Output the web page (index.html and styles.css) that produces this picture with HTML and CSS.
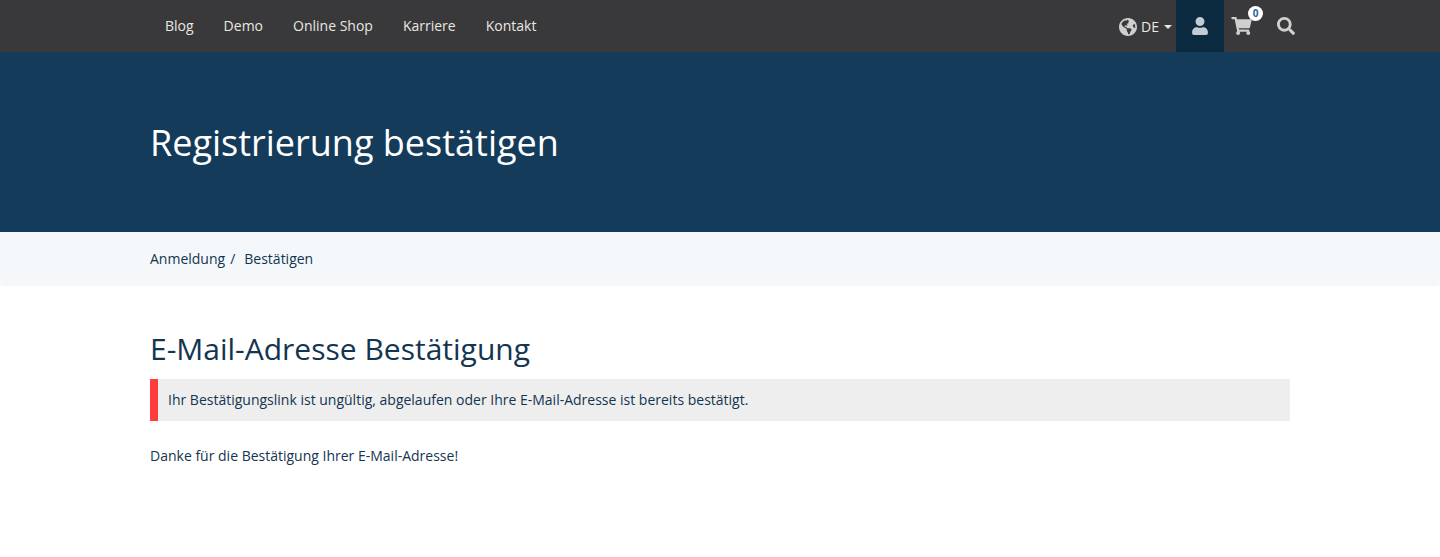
FILE: index.html
```html
<!DOCTYPE html>
<html lang="de">
<head>
    <meta charset="UTF-8">
    <meta name="viewport" content="width=device-width, initial-scale=1.0">
    <title>Registrierung bestätigen</title>
    <link rel="stylesheet" href="styles.css">
</head>
<body>
    <nav class="navbar">
        <div class="nav-inner">
            <ul class="nav-links">
                <li><a href="#">Blog</a></li>
                <li><a href="#">Demo</a></li>
                <li><a href="#">Online Shop</a></li>
                <li><a href="#">Karriere</a></li>
                <li><a href="#">Kontakt</a></li>
            </ul>
            <div class="nav-tools">
                <a class="lang" href="#">
                    <svg class="icon-globe" viewBox="0 0 496 512"><path d="M248 8C111.03 8 0 119.03 0 256s111.03 248 248 248 248-111.03 248-248S384.97 8 248 8zm82.29 357.6c-3.9 3.88-7.99 7.95-11.31 11.28-2.99 3-5.1 6.7-6.17 10.71-1.51 5.66-2.73 11.38-4.77 16.87l-17.39 46.85c-13.76 3-28 4.69-42.65 4.69v-27.38c1.69-12.62-7.64-36.26-22.63-51.25-6-6-9.37-14.14-9.37-22.63v-32.01c0-11.64-6.27-22.34-16.46-27.97-14.37-7.95-34.81-19.06-48.81-26.11-11.48-5.78-22.1-13.14-31.65-21.75l-.8-.72a114.792 114.792 0 0 1-18.06-20.74c-9.38-13.77-24.66-36.42-34.59-51.14 20.47-45.5 57.36-82.04 103.2-101.89l24.01 12.01C203.48 89.74 216 82.01 216 70.11v-11.3c7.99-1.29 16.12-2.11 24.39-2.42l28.3 28.3c6.25 6.25 6.25 16.38 0 22.63L264 112l-10.34 10.34c-3.12 3.12-3.12 8.19 0 11.31l4.69 4.69c3.12 3.12 3.12 8.19 0 11.31l-8 8a8.008 8.008 0 0 1-5.66 2.34h-8.99c-2.08 0-4.08.81-5.58 2.27l-9.92 9.65a8.008 8.008 0 0 0-1.58 9.31l15.59 31.19c2.66 5.32-1.21 11.58-7.15 11.58h-5.64c-1.93 0-3.79-.7-5.24-1.96l-9.28-8.06a16.017 16.017 0 0 0-15.55-3.1l-31.17 10.39a11.95 11.95 0 0 0-8.17 11.34c0 4.53 2.56 8.66 6.61 10.69l11.08 5.54c9.41 4.71 19.79 7.16 30.31 7.16s22.59 27.29 32 32h66.75c8.49 0 16.62 3.37 22.63 9.37l13.69 13.69a30.503 30.503 0 0 1 8.93 21.57 46.536 46.536 0 0 1-13.72 32.98zM417 274.25c-5.79-1.45-10.84-5-14.15-9.97l-17.98-26.97a23.97 23.97 0 0 1 0-26.62l19.59-29.38c2.32-3.47 5.5-6.29 9.24-8.15l12.98-6.49C440.2 193.59 448 223.87 448 256c0 8.67-.74 17.16-1.82 25.54L417 274.25z"/></svg>
                    <span>DE</span>
                    <span class="caret"></span>
                </a>
                <a class="tool tool-active" href="#">
                    <svg class="icon-user" viewBox="0 0 448 512"><path d="M224 256c70.7 0 128-57.3 128-128S294.7 0 224 0 96 57.3 96 128s57.3 128 128 128zm89.6 32h-16.7c-22.2 10.2-46.9 16-72.9 16s-50.6-5.8-72.9-16h-16.7C60.2 288 0 348.2 0 422.4V464c0 26.5 21.5 48 48 48h352c26.5 0 48-21.5 48-48v-41.6c0-74.2-60.2-134.4-134.4-134.4z"/></svg>
                </a>
                <a class="tool tool-cart" href="#">
                    <svg class="icon-cart" viewBox="0 0 576 512"><path d="M528.12 301.319l47.273-208C578.806 78.301 567.391 64 551.99 64H159.208l-9.166-44.81C147.758 8.021 137.93 0 126.529 0H24C10.745 0 0 10.745 0 24v16c0 13.255 10.745 24 24 24h69.883l70.248 343.435C147.325 417.1 136 435.222 136 456c0 30.928 25.072 56 56 56s56-25.072 56-56c0-15.674-6.447-29.835-16.824-40h209.647C430.447 426.165 424 440.326 424 456c0 30.928 25.072 56 56 56s56-25.072 56-56c0-22.172-12.888-41.332-31.579-50.405l5.517-24.276c3.413-15.018-8.002-29.319-23.403-29.319H218.117l-6.545-32h293.145c11.206 0 20.92-7.754 23.403-18.681z"/></svg>
                    <span class="badge">0</span>
                </a>
                <a class="tool" href="#">
                    <svg class="icon-search" viewBox="0 0 512 512"><path d="M505 442.7L405.3 343c-4.5-4.5-10.6-7-17-7H372c27.6-35.3 44-79.7 44-128C416 93.1 322.9 0 208 0S0 93.1 0 208s93.1 208 208 208c48.3 0 92.7-16.4 128-44v16.3c0 6.4 2.5 12.5 7 17l99.7 99.7c9.4 9.4 24.6 9.4 33.9 0l28.3-28.3c9.4-9.4 9.4-24.6.1-34zM208 336c-70.7 0-128-57.2-128-128 0-70.7 57.2-128 128-128 70.7 0 128 57.2 128 128 0 70.7-57.2 128-128 128z"/></svg>
                </a>
            </div>
        </div>
    </nav>

    <header class="page-header">
        <div class="container">
            <h1>Registrierung bestätigen</h1>
        </div>
    </header>

    <div class="breadcrumb">
        <div class="container">
            <a href="#">Anmeldung</a><span class="sep">/</span><a href="#">Bestätigen</a>
        </div>
    </div>

    <main class="container content">
        <h2>E-Mail-Adresse Bestätigung</h2>
        <div class="alert">Ihr Bestätigungslink ist ungültig, abgelaufen oder Ihre E-Mail-Adresse ist bereits bestätigt.</div>
        <p>Danke für die Bestätigung Ihrer E-Mail-Adresse!</p>
    </main>
</body>
</html>
```

FILE: styles.css
```css
* {
    margin: 0;
    padding: 0;
    box-sizing: border-box;
}

body {
    font-family: "Open Sans", sans-serif;
    font-size: 14px;
    line-height: 20px;
    color: #133551;
    background: #fff;
}

a {
    color: inherit;
    text-decoration: none;
}

.container {
    width: 1140px;
    margin: 0 auto;
}

.navbar {
    height: 52px;
    background: #39383a;
    color: #e8e8e0;
}

.nav-inner {
    width: 1160px;
    margin-left: 150px;
    height: 52px;
    display: flex;
    justify-content: space-between;
}

.nav-links {
    display: flex;
    list-style: none;
}

.nav-links a {
    display: block;
    padding: 16px 15px;
}

.nav-tools {
    display: flex;
}

.lang {
    display: flex;
    align-items: center;
    padding-right: 4px;
    padding-top: 2px;
}

.icon-globe {
    width: 18px;
    height: 20px;
    margin-right: 4px;
    fill: #cfcfcf;
}

.caret {
    width: 0;
    height: 0;
    margin-left: 5px;
    border-top: 4px solid #e8e8e0;
    border-left: 4px solid transparent;
    border-right: 4px solid transparent;
}

.tool {
    position: relative;
    width: 48px;
    height: 52px;
    display: flex;
    align-items: center;
    justify-content: center;
    fill: #cfcfcf;
}

.tool-active {
    background: #0b2a3f;
    fill: #c3ccd3;
}

.tool-cart {
    width: 38px;
    justify-content: flex-start;
    padding-left: 7px;
}

.icon-user {
    width: 16px;
    height: 18px;
}

.icon-cart {
    width: 21px;
    height: 18px;
}

.icon-search {
    width: 18px;
    height: 18px;
}

.badge {
    position: absolute;
    top: 6px;
    left: 24px;
    width: 15px;
    height: 15px;
    border-radius: 50%;
    background: #fff;
    color: #2a6491;
    font-size: 10px;
    font-weight: 700;
    line-height: 15px;
    text-align: center;
}

.page-header {
    height: 180px;
    background: #153b5a;
    color: #fff;
    display: flex;
    align-items: center;
    padding-top: 2px;
}

h1 {
    font-size: 36px;
    font-weight: 400;
    line-height: 40px;
}

.breadcrumb {
    height: 54px;
    background: #f4f8fb;
    border-radius: 0 0 4px 4px;
    padding-top: 17px;
}

.sep {
    margin: 0 9px 0 5px;
}

.content {
    padding-top: 43px;
}

h2 {
    font-size: 30px;
    font-weight: 400;
    line-height: 40px;
    margin-bottom: 10px;
}

.alert {
    height: 42px;
    padding: 11px 10px;
    background: #eee;
    border-left: 8px solid #ff3c3c;
    margin-bottom: 25px;
}
```
